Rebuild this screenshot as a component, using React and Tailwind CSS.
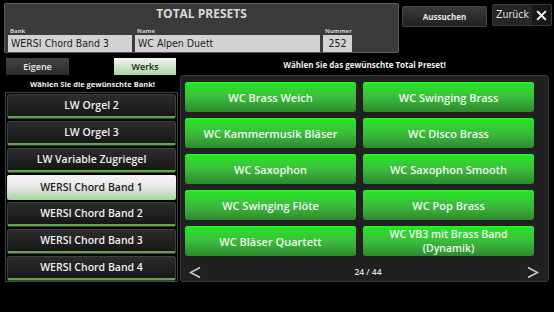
import React from 'react';

const banks = [
  'LW Orgel 2',
  'LW Orgel 3',
  'LW Variable Zugriegel',
  'WERSI Chord Band 1',
  'WERSI Chord Band 2',
  'WERSI Chord Band 3',
  'WERSI Chord Band 4',
];

const presets = [
  ['WC Brass Weich'],
  ['WC Swinging Brass'],
  ['WC Kammermusik Bläser'],
  ['WC Disco Brass'],
  ['WC Saxophon'],
  ['WC Saxophon Smooth'],
  ['WC Swinging Flöte'],
  ['WC Pop Brass'],
  ['WC Bläser Quartett'],
  ['WC VB3 mit Brass Band', '(Dynamik)'],
];

const Field = ({ label, value, width, center }) => (
  <div className="flex flex-col">
    <span className="text-[6px] font-bold leading-[8px] text-[#cfcfcf] pl-[2px]">{label}</span>
    <div
      className={`${width} ${center ? 'text-center' : ''} h-[17px] bg-[#d2d2d2] text-[#1c1c1c] text-[10.5px] leading-[17px] px-[3px] font-['DejaVu_Sans_Condensed','DejaVu_Sans',sans-serif]`}
    >
      {value}
    </div>
  </div>
);

export default function App() {
  return (
    <div className="w-[554px] h-[312px] bg-black font-['Open_Sans',sans-serif] text-white overflow-hidden">
      {/* Top header */}
      <div className="flex items-start">
        <div className="mt-[3px] ml-[4px] w-[395px] h-[50px] bg-[#3b3b3b] border border-[#5c5c5c] rounded-[2px] px-[3px]">
          <div className="text-center text-[12px] font-bold text-[#d8d8d8] leading-[16px] mt-[2px]">TOTAL PRESETS</div>
          <div className="flex gap-[3px] mt-[5px]">
            <Field label="Bank" value="WERSI Chord Band 3" width="w-[124px]" />
            <Field label="Name" value="WC Alpen Duett" width="w-[185px]" />
            <Field label="Nummer" value="252" width="w-[29px]" center />
          </div>
        </div>
        <button className="mt-[6px] ml-[3px] w-[85px] h-[21px] rounded-[2px] bg-gradient-to-b from-[#3a3a3a] to-[#222] border border-[#444] text-[8px] font-bold text-[#e6e6e6]">
          Aussuchen
        </button>
        <div className="mt-[4px] ml-[5px] w-[60px] h-[22px] rounded-[2px] bg-[#262626] border border-[#3a3a3a] flex items-center justify-between pl-[3px]">
          <span className="text-[10.5px] text-[#e0e0e0] font-['DejaVu_Sans_Condensed','DejaVu_Sans',sans-serif]">Zurück</span>
          <span className="w-[19px] h-[20px] bg-[#181818] flex items-center justify-center">
            <svg width="11" height="11" viewBox="0 0 12 12">
              <path d="M2 2L10 10M10 2L2 10" stroke="#f2f2f2" strokeWidth="2.2" strokeLinecap="square" />
            </svg>
          </span>
        </div>
      </div>

      {/* Body */}
      <div className="flex mt-[3px]">
        {/* Left column */}
        <div className="ml-[5px] w-[173px] flex flex-col">
          <div className="flex justify-between px-[1px] mt-[2px]">
            <button className="w-[63px] h-[17px] bg-gradient-to-b from-[#444] to-[#2c2c2c] text-[9px] font-semibold text-[#e8e8e8]">
              Eigene
            </button>
            <button className="w-[62px] h-[17px] bg-gradient-to-b from-[#f4f4f4] to-[#a9d6a1] text-[9px] font-semibold text-[#222] mr-[1px]">
              Werks
            </button>
          </div>
          <div className="text-center text-[7.5px] font-bold leading-[10px] mt-[4px] pl-[2px] text-[#f0f0f0]">
            Wählen Sie die gewünschte Bank!
          </div>
          <div className="mt-[3px] h-[190px] border border-[#3c4650] rounded-[1px] px-[1px] pt-[1px] flex flex-col gap-[2px]">
            {banks.map((b, i) =>
              i === 3 ? (
                <div
                  key={b}
                  className="h-[25px] rounded-[2px] bg-gradient-to-b from-[#f5f5f5] via-[#e6e6e6] to-[#a3d59a] flex items-center justify-center text-[10.5px] font-semibold text-[#1e1e1e]"
                >
                  {b}
                </div>
              ) : (
                <div
                  key={b}
                  className="h-[25px] rounded-[2px] border border-[#3e3e3e] bg-gradient-to-b from-[#2c2c2c] to-[#151515] flex flex-col"
                >
                  <div className="flex-1 flex items-center justify-center text-[10.5px] font-semibold text-[#f0f0f0]">{b}</div>
                  <div className="h-[2px] bg-[#5aa84a]" />
                </div>
              )
            )}
          </div>
        </div>

        {/* Right column */}
        <div className="ml-[2px] w-[369px] flex flex-col">
          <div className="text-center text-[8px] font-bold leading-[10px] mt-[4px] text-[#f0f0f0]">
            Wählen Sie das gewünschte Total Preset!
          </div>
          <div className="mt-[5px] h-[207px] bg-[#202020] border border-[#3a3a3a] rounded-[3px] pl-[4px] pt-[6px] flex flex-col">
            <div className="grid grid-cols-[171px_171px] gap-x-[7px] gap-y-[6px]">
              {presets.map((p) => (
                <div
                  key={p[0]}
                  className={`h-[30px] rounded-[3px] bg-gradient-to-b from-[#1ee81e] via-[#3cbd3c] to-[#2f8a2f] shadow-[inset_0_2px_0_#22f022] flex items-center justify-center text-center font-semibold text-[#eef8ee] ${
                    p[1] ? 'text-[10.5px] leading-[14.5px]' : 'text-[11px] leading-[13px]'
                  }`}
                >
                  <p>
                    {p[0]}
                    {p[1] && <br />}
                    {p[1]}
                  </p>
                </div>
              ))}
            </div>
            <div className="flex items-center justify-between pr-[9px] pl-[4px] mt-[7px] h-[20px]">
              <svg width="12" height="13" viewBox="0 0 12 13">
                <path d="M11 1.5L1.5 6.5L11 11.5" stroke="#cfcfcf" strokeWidth="1.5" fill="none" />
              </svg>
              <span className="text-[8.5px] font-semibold text-[#e0e0e0] ml-[8px]">24 / 44</span>
              <svg width="12" height="13" viewBox="0 0 12 13">
                <path d="M1 1.5L10.5 6.5L1 11.5" stroke="#cfcfcf" strokeWidth="1.5" fill="none" />
              </svg>
            </div>
          </div>
        </div>
      </div>
    </div>
  );
}
